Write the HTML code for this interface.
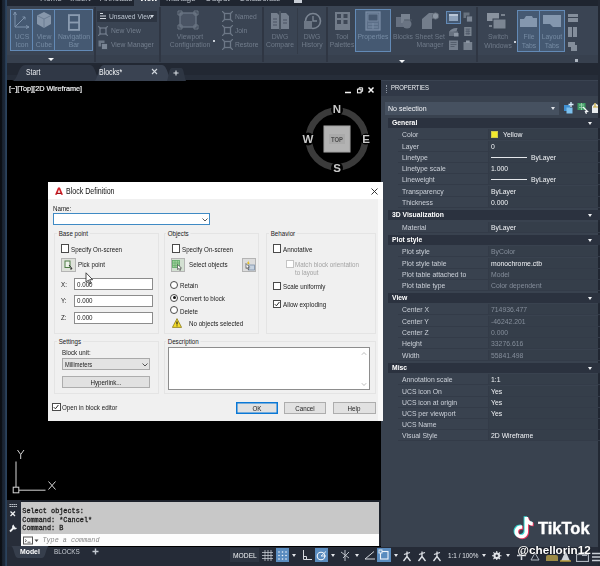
<!DOCTYPE html>
<html>
<head>
<meta charset="utf-8">
<style>
*{box-sizing:border-box;margin:0;padding:0}
html,body{width:600px;height:566px;overflow:hidden;background:#000}
body{font-family:"Liberation Sans",sans-serif;position:relative;color:#d8dce2}
#root{position:absolute;left:0;top:0;width:600px;height:566px;overflow:hidden;filter:blur(.4px)}
.a{position:absolute}
.t{position:absolute;white-space:nowrap}
/* ribbon */
.rl{position:absolute;white-space:nowrap;color:#6f7a89;font-size:8px;line-height:9px;text-align:center;transform:translateX(-50%) scaleX(.85)}
.rs{position:absolute;white-space:nowrap;color:#737e8d;font-size:8px;line-height:9px;transform:scaleX(.84);transform-origin:0 50%}
.hb{position:absolute;background:#455972;border:1px solid #638ab6}
.rl.hl{color:#768ba3}
.sep{position:absolute;top:7px;width:2px;height:55px;background:#2f3643}
.ic{position:absolute;background:#6a7482}
/* props */
.ps{position:absolute;left:388px;width:212px;height:10px;background:#2b323f;color:#fff;font-weight:bold;font-size:7.8px;line-height:10px}
.ps em{position:absolute;left:4px;top:0;font-style:normal;white-space:nowrap;transform:scaleX(.87);transform-origin:0 50%}
.ps i{position:absolute;right:8px;top:4px;width:0;height:0;border-left:2.5px solid transparent;border-right:2.5px solid transparent;border-top:3px solid #eef0f3}
.pr{position:absolute;left:388px;width:212px;height:11px;font-size:7.7px;line-height:11px;color:#ccd1d9}
.pr b{position:absolute;left:14px;font-weight:normal;white-space:nowrap;transform:scaleX(.89);transform-origin:0 50%}
.pr u{position:absolute;left:103px;text-decoration:none;color:#f3f5f8;white-space:nowrap;transform:scaleX(.89);transform-origin:0 50%}
.pr u.d{color:#858e9b}
.pr s{position:absolute;left:10px;right:0;bottom:0;height:1px;background:#333b48;text-decoration:none}
.pr q{position:absolute;left:100px;right:0;top:0;bottom:0;background:rgba(20,26,36,.10);border-left:1px solid #333b48}
.pr q:before,.pr q:after{content:''}
/* dialog */
#dlg{position:absolute;left:48.400px;top:182px;width:335px;height:238.500px;background:#f0f0f0;color:#1a1a1a;font-size:7.4px}
#dlg .t{line-height:9px;transform:translateY(-50%) scaleX(.84);transform-origin:0 50%}
.grp{position:absolute;border:1px solid #e4e4e4}
.cb{position:absolute;width:8.3px;height:8.3px;border:1px solid #4a4a4a;background:#fff}
.rd{position:absolute;width:8px;height:8px;border:1px solid #4a4a4a;background:#fff;border-radius:50%}
.inp{position:absolute;background:#fff;border:1px solid #7a7a7a;font-size:7.6px;letter-spacing:-.2px}
.btn{position:absolute;background:#e1e1e1;border:1px solid #adadad;font-size:7.6px;text-align:center;letter-spacing:-.2px}
.ib{position:absolute;background:#dddddd;border:1px solid #b4b4b4}
</style>
</head>
<body>
<div id="root">
<!-- base -->
<div class="a" style="left:0;top:0;width:600px;height:63px;background:#3a4453"></div>
<div class="a" style="left:0;top:55px;width:600px;height:8px;background:#37404e"></div>
<div class="a" style="left:0;top:0;width:600px;height:6px;background:#1f2530"></div>
<div class="a" style="left:134px;top:0;width:26px;height:7px;background:#3a4453"></div>
<div class="a" style="left:0;top:63px;width:600px;height:17px;background:#222833"></div>
<div class="a" style="left:0;top:75px;width:600px;height:5px;background:#262d39"></div>
<div class="a" style="left:7.500px;top:80px;width:373.200px;height:420px;background:#000"></div>
<div class="a" style="left:381px;top:80px;width:219px;height:467px;background:#39424f"></div>
<div class="a" style="left:381px;top:80px;width:0;height:0"></div>
<div class="a" style="left:381px;top:79.500px;width:219px;height:16px;background:#313947;border-top:1.500px solid #3a4351"></div>
<div class="a" style="left:0;top:546.500px;width:600px;height:20px;background:#252b37"></div>
<div class="a" style="left:598px;top:0;width:2px;height:566px;background:#222833"></div>
<div class="a" style="left:0;top:0;width:7.200px;height:566px;background:linear-gradient(90deg,#0b0e13 0,#0d1117 2px,#1a2432 2.600px,#1c2838 5.200px,#2b425c 5.600px,#2b425c 6.600px,#20262f 7.200px)"></div>
<div class="a" style="left:7px;top:500px;width:374px;height:46px;background:#1d222b"></div>
<div class="a" style="left:7px;top:500px;width:14px;height:46.500px;background:#272d39"></div>
<!-- sec_ribbon -->
<div class="t" style="left:40px;top:-6.800px;font-size:8.5px;line-height:10px;color:#b9bfc8;width:18px;text-align:center;letter-spacing:-.2px">Home</div>
<div class="t" style="left:70px;top:-6.800px;font-size:8.5px;line-height:10px;color:#b9bfc8;width:15px;text-align:center;letter-spacing:-.2px">Insert</div>
<div class="t" style="left:100px;top:-6.800px;font-size:8.5px;line-height:10px;color:#b9bfc8;width:28px;text-align:center;letter-spacing:-.2px">Annotate</div>
<div class="t" style="left:166px;top:-6.800px;font-size:8.5px;line-height:10px;color:#b9bfc8;width:27px;text-align:center;letter-spacing:-.2px">Manage</div>
<div class="t" style="left:205px;top:-6.800px;font-size:8.5px;line-height:10px;color:#b9bfc8;width:23px;text-align:center;letter-spacing:-.2px">Output</div>
<div class="t" style="left:239px;top:-6.800px;font-size:8.5px;line-height:10px;color:#b9bfc8;width:36px;text-align:center;letter-spacing:-.2px">Collaborate</div>
<div class="t" style="left:139px;top:-6.800px;font-size:8.5px;line-height:10px;color:#fff;font-weight:bold;letter-spacing:-.2px">View</div>
<div class="a" style="left:294px;top:0;width:8px;height:3px;background:#c9ced6"></div>
<div class="sep" style="left:94px"></div>
<div class="sep" style="left:159px"></div>
<div class="sep" style="left:262px"></div>
<div class="sep" style="left:326px"></div>
<div class="sep" style="left:476px"></div>
<div class="a" style="left:297px;top:8px;width:1px;height:46px;background:#333b48"></div>
<div class="hb" style="left:10px;top:9px;width:23px;height:42px"></div>
<div class="hb" style="left:32px;top:9px;width:23px;height:42px"></div>
<div class="hb" style="left:54px;top:9px;width:39px;height:42px"></div>
<svg class="a" style="left:12px;top:11px" width="19" height="20" viewBox="0 0 19 20"><path d="M3 1v15h14M3 16L13 6" stroke="#7f93ab" stroke-width="1" fill="none"/><path d="M1.5 4L3 1l1.5 3M14 14.5l3 1.5-3 1.5M10.5 6H13v2.5" stroke="#7f93ab" stroke-width="1" fill="none"/></svg>
<svg class="a" style="left:35px;top:11px" width="18" height="19" viewBox="0 0 18 19"><path d="M9 1l7 3.5v8.5l-7 4-7-4V4.5z" fill="#8797ab"/><path d="M2 4.5l7 3.5 7-3.5M9 8v9" stroke="#6b7d93" stroke-width="1" fill="none"/></svg>
<svg class="a" style="left:68px;top:13.500px" width="12" height="17" viewBox="0 0 13 18"><rect x="1" y="1" width="11" height="16" fill="none" stroke="#8a9bb0" stroke-width="2"/><path d="M1 9h11" stroke="#8a9bb0" stroke-width="2"/></svg>
<div class="rl hl" style="left:21.5px;top:31.5px">UCS</div>
<div class="rl hl" style="left:21.5px;top:40.3px">Icon</div>
<div class="rl hl" style="left:43.5px;top:31.5px">View</div>
<div class="rl hl" style="left:43.5px;top:40.3px">Cube</div>
<div class="rl hl" style="left:73.5px;top:31.5px">Navigation</div>
<div class="rl hl" style="left:73.5px;top:40.3px">Bar</div>
<div class="a" style="left:48px;top:58px;width:0;height:0;border-left:3px solid transparent;border-right:3px solid transparent;border-top:3.5px solid #f4f6f8"></div>
<div class="a" style="left:97px;top:11px;width:59.500px;height:10.500px;background:#2d3542"></div>
<svg class="a" style="left:99px;top:12.300px" width="8" height="8" viewBox="0 0 8 8"><path d="M1 1.5h3M1 4h6M1 6.5h6" stroke="#d5dae1" stroke-width="1.2"/></svg>
<div class="rs" style="left:109px;top:11.800px;color:#bcc5d1">Unsaved View</div>
<div class="a" style="left:150px;top:14.800px;width:0;height:0;border-left:2.5px solid transparent;border-right:2.5px solid transparent;border-top:3px solid #cfd5dd"></div>
<svg class="a" style="left:98px;top:26px" width="10" height="10" viewBox="0 0 10 10"><rect x="2" y="2" width="6" height="6" fill="none" stroke="#6d7887" stroke-width="1.3"/><path d="M0 0l3 3M10 0L7 3M0 10l3-3M10 10L7 7" stroke="#6d7887" stroke-width="1.2"/></svg>
<div class="rs" style="left:110.5px;top:26.2px">New View</div>
<svg class="a" style="left:98px;top:40px" width="10" height="10" viewBox="0 0 10 10"><rect x="0.5" y="0.5" width="6" height="6" fill="#6d7887"/><rect x="3.5" y="3.5" width="6" height="6" fill="#7b8695" stroke="#394251" stroke-width=".8"/></svg>
<div class="rs" style="left:110.5px;top:40.3px">View Manager</div>
<svg class="a" style="left:177px;top:10px" width="22" height="20" viewBox="0 0 22 20"><rect x="3" y="3" width="16" height="14" fill="#4a5464" stroke="#6f7a89" stroke-width="1.2"/><path d="M1 1h4v4H1zM17 1h4v4h-4zM1 15h4v4H1zM17 15h4v4h-4z" fill="none" stroke="#6f7a89" stroke-width=".9"/></svg>
<div class="rl" style="left:189.5px;top:31.5px">Viewport</div>
<div class="rl" style="left:189.5px;top:40.3px">Configuration</div>
<div class="a" style="left:212.5px;top:40px;width:2px;height:2px;background:#c8ced6"></div>
<svg class="a" style="left:222px;top:11.0px" width="11" height="11" viewBox="0 0 11 11"><rect x="2.5" y="2.5" width="6" height="6" fill="none" stroke="#6d7887" stroke-width="1.3"/><path d="M0 0l3 3M11 0L8 3M0 11l3-3M11 11L8 8" stroke="#6d7887" stroke-width="1.2"/></svg>
<div class="rs" style="left:235.3px;top:12.0px">Named</div>
<svg class="a" style="left:222px;top:25.2px" width="11" height="11" viewBox="0 0 11 11"><rect x="2.5" y="2.5" width="6" height="6" fill="none" stroke="#6d7887" stroke-width="1.3"/><path d="M0 0l3 3M11 0L8 3M0 11l3-3M11 11L8 8" stroke="#6d7887" stroke-width="1.2"/></svg>
<div class="rs" style="left:235.3px;top:26.2px">Join</div>
<svg class="a" style="left:222px;top:39.3px" width="11" height="11" viewBox="0 0 11 11"><rect x="2.5" y="2.5" width="6" height="6" fill="none" stroke="#6d7887" stroke-width="1.3"/><path d="M0 0l3 3M11 0L8 3M0 11l3-3M11 11L8 8" stroke="#6d7887" stroke-width="1.2"/></svg>
<div class="rs" style="left:235.3px;top:40.3px">Restore</div>
<svg class="a" style="left:270px;top:11px" width="20" height="19" viewBox="0 0 20 19"><path d="M1 2h6l2 2v14H1zM11 2h5l3 3v13h-8z" fill="#757f8d"/><path d="M3 8h4M3 11h4M3 14h4M13 9h4M13 12h4" stroke="#4a5362" stroke-width="1"/><path d="M10 0v19" stroke="#59626f" stroke-width="1"/></svg>
<div class="rl" style="left:279.5px;top:31.5px">DWG</div>
<div class="rl" style="left:279.5px;top:40.3px">Compare</div>
<svg class="a" style="left:303px;top:12px" width="19" height="19" viewBox="0 0 19 19"><circle cx="10" cy="9" r="7.5" fill="none" stroke="#7a8492" stroke-width="1.6"/><path d="M10 4v5h4" stroke="#7a8492" stroke-width="1.4" fill="none"/><rect x="1" y="9" width="8" height="8" fill="#6d7785"/></svg>
<div class="rl" style="left:312.0px;top:31.5px">DWG</div>
<div class="rl" style="left:312.0px;top:40.3px">History</div>
<svg class="a" style="left:334px;top:11px" width="17" height="20" viewBox="0 0 17 20"><rect x="1" y="1" width="15" height="18" fill="#727c8a"/><path d="M3 3h4v4H3zM9.5 3h4v4h-4zM3 9h4v4H3zM9.5 9h4v4h-4z" fill="#3f4857"/></svg>
<div class="rl" style="left:342.0px;top:31.5px">Tool</div>
<div class="rl" style="left:342.0px;top:40.3px">Palettes</div>
<div class="hb" style="left:355px;top:9px;width:36px;height:43px"></div>
<svg class="a" style="left:365px;top:11px" width="16" height="20" viewBox="0 0 16 20"><rect x="1" y="1" width="14" height="18" fill="#5c6f88" stroke="#7d90a8" stroke-width="1.2"/><rect x="3" y="3" width="10" height="7" fill="#485a72" stroke="#7d90a8" stroke-width=".8"/><path d="M3 13h10M3 16h10M8 12v6" stroke="#7d90a8" stroke-width=".9"/></svg>
<div class="rl hl" style="left:373.0px;top:31.5px">Properties</div>
<svg class="a" style="left:394px;top:12px" width="19" height="18" viewBox="0 0 19 18"><path d="M2 5h8v10H2z" fill="#667080"/><path d="M7 2h9v9H7z" fill="#788290"/><circle cx="13" cy="12" r="4.5" fill="#6a7483"/><path d="M10 8l8 0" stroke="#525c6a" stroke-width="1"/></svg>
<div class="rl" style="left:402.5px;top:31.5px">Blocks</div>
<svg class="a" style="left:420px;top:11px" width="20" height="20" viewBox="0 0 20 20"><path d="M2 18V8l7-6h9l-6 6v10z" fill="#737d8b"/><circle cx="15.5" cy="5" r="3.2" fill="#8a94a1" stroke="#59626f" stroke-width=".8"/></svg>
<div class="rl" style="left:430.0px;top:31.5px">Sheet Set</div>
<div class="rl" style="left:430.0px;top:40.3px">Manager</div>
<div class="a" style="left:399px;top:59.5px;width:0;height:0;border-left:3px solid transparent;border-right:3px solid transparent;border-top:3.5px solid #f4f6f8"></div>
<div class="hb" style="left:446.400px;top:10.500px;width:14.500px;height:13.500px"></div>
<div class="a" style="left:449px;top:14px;width:9px;height:7px;background:#8fa3bb"></div>
<div class="a" style="left:449px;top:14px;width:9px;height:1.500px;background:#b9c6d6"></div>
<svg class="a" style="left:446px;top:10px" width="28" height="42" viewBox="0 0 28 42"><rect x="17.500" y="2.500" width="6" height="5.500" fill="#68727f"/><rect x="20.500" y="6" width="6" height="6" fill="#7c8694" stroke="#3a4453" stroke-width=".8"/><path d="M3 22.500c1-3.500 5-5 8.500-4.500l-1 3.500z" fill="#7a8492"/><rect x="3" y="21.500" width="9" height="4.500" fill="#687280"/><rect x="8" y="23" width="4.500" height="3.500" fill="#8e98a5"/><rect x="18.200" y="17" width="7.300" height="9" fill="#79838f"/><path d="M19.500 19h4.700M19.500 21.300h4.700M19.500 23.600h4.700M21 19v6M22.800 19v6" stroke="#4b5564" stroke-width=".7"/><rect x="3" y="30.500" width="9" height="9.500" fill="#747e8c"/><path d="M4.500 32.500h6M4.500 34.500h6M4.500 36.500h4" stroke="#4b5564" stroke-width=".8"/><rect x="17.500" y="32" width="8.700" height="8" fill="#77818e"/><rect x="20" y="30.500" width="3.700" height="2.500" fill="#8d97a4"/></svg>
<svg class="a" style="left:487px;top:13px" width="20" height="17" viewBox="0 0 20 17"><rect x="0" y="0" width="12" height="8" fill="#8a939f"/><rect x="6" y="6" width="13" height="10" fill="#7b8592" stroke="#394251" stroke-width="1"/><path d="M14 2h4M2 13h3" stroke="#b8c0ca" stroke-width="1.2"/></svg>
<div class="rl" style="left:497.5px;top:31.8px">Switch</div>
<div class="rl" style="left:497.5px;top:40.8px">Windows</div>
<div class="a" style="left:514px;top:40.5px;width:2px;height:2px;background:#c8ced6"></div>
<div class="hb" style="left:517px;top:10px;width:23px;height:42px"></div>
<div class="hb" style="left:539px;top:10px;width:26px;height:42px"></div>
<svg class="a" style="left:520px;top:14px" width="17" height="14" viewBox="0 0 17 14"><path d="M0 13V5h4l2-3h6l1 2h4v9z" fill="#8497ae"/></svg>
<svg class="a" style="left:543px;top:14px" width="18" height="14" viewBox="0 0 18 14"><path d="M0 1h18v12H10l-3-3H0z" fill="#8497ae"/></svg>
<div class="rl hl" style="left:528.5px;top:31.8px">File</div>
<div class="rl hl" style="left:528.5px;top:40.8px">Tabs</div>
<div class="rl hl" style="left:552.0px;top:31.8px">Layout</div>
<div class="rl hl" style="left:552.0px;top:40.8px">Tabs</div>
<div class="ic" style="left:568.0px;top:13.5px;width:9.5px;height:3.5px;background:#848e9b"></div>
<div class="ic" style="left:568.0px;top:18.0px;width:9.5px;height:3.5px;background:#848e9b"></div>
<div class="ic" style="left:568.0px;top:27.0px;width:4.0px;height:9.5px;background:#848e9b"></div>
<div class="ic" style="left:572.5px;top:27.0px;width:4.5px;height:9.5px;background:#848e9b"></div>
<div class="ic" style="left:568.0px;top:41.5px;width:6.5px;height:5.5px;background:#848e9b"></div>
<div class="ic" style="left:570.5px;top:45.0px;width:6.5px;height:5.5px;background:#848e9b"></div>
<div class="a" style="left:575px;top:59px;width:3px;height:3px;background:#aeb6c1"></div>
<!-- sec_tabs -->
<svg class="a" style="left:10px;top:64px" width="190" height="17" viewBox="0 0 190 17"><path d="M2 17C8 17 8 1 15 1H80C86 1 86 17 92 17z" fill="#303846"/><path d="M84 17C88 17 88 1 94 1H152C158 1 158 17 164 17z" fill="#3a4352"/><path d="M157 17C159 12 159 4 162 4H171C174 4 174 12 176 17z" fill="#2e3643"/></svg>
<div class="t" style="left:26px;top:67px;font-size:8.2px;line-height:12px;color:#e9ecf0;transform:scaleX(.83);transform-origin:0 50%">Start</div>
<div class="t" style="left:98.500px;top:67px;font-size:8.2px;line-height:12px;color:#f4f6f8;transform:scaleX(.85);transform-origin:0 50%">Blocks*</div>
<svg class="a" style="left:151px;top:68px" width="7" height="7" viewBox="0 0 7 7"><path d="M1 1l5 5M6 1L1 6" stroke="#cfd5dc" stroke-width="1.1"/></svg>
<svg class="a" style="left:172.500px;top:70px" width="6" height="6" viewBox="0 0 7 7"><path d="M3.5 .5v6M.5 3.5h6" stroke="#d8dde3" stroke-width="1.3"/></svg>
<!-- sec_canvas -->
<div class="t" style="left:9px;top:84px;font-size:7.6px;line-height:10px;color:#f0f1f3;-webkit-text-stroke:.2px #f0f1f3;transform:scaleX(.96);transform-origin:0 50%">[&minus;][Top][2D Wireframe]</div>
<svg class="a" style="left:343px;top:85px" width="34" height="11" viewBox="0 0 34 11"><path d="M2 7.5h6" stroke="#f2f2f2" stroke-width="1.5"/><rect x="14.500" y="4.200" width="3.600" height="3.600" fill="none" stroke="#ededed" stroke-width="1.100"/><path d="M16 4.200V2.800h3.600v3.600h-1.500" fill="none" stroke="#ededed" stroke-width="1"/><path d="M25.5 2.5l5 5M30.500 2.5l-5 5" stroke="#f5f5f5" stroke-width="1.5"/></svg>
<svg class="a" style="left:296px;top:98px" width="82" height="82" viewBox="0 0 82 82"><circle cx="41" cy="41" r="28.2" fill="none" stroke="#3b3b3b" stroke-width="6.6"/><circle cx="41" cy="12" r="6" fill="#000"/><circle cx="41" cy="70" r="6" fill="#000"/><circle cx="12" cy="41" r="6.5" fill="#000"/><circle cx="70" cy="41" r="5.5" fill="#000"/><rect x="27.5" y="27.5" width="27" height="27" fill="#a9a9a9"/><rect x="29" y="29" width="24" height="24" fill="#b3b3b3"/><rect x="33" y="36" width="16" height="10" fill="#aaaaaa"/><g font-family="Liberation Sans, sans-serif" font-weight="bold" fill="#c9c9c9" text-anchor="middle" font-size="11.5"><text x="41" y="15">N</text><text x="41" y="74.4">S</text><text x="12" y="45">W</text><text x="70" y="45">E</text></g><text x="41" y="43.8" font-family="Liberation Sans, sans-serif" font-size="7" font-weight="bold" fill="#4d4d4d" text-anchor="middle" textLength="12" lengthAdjust="spacingAndGlyphs">TOP</text></svg>
<svg class="a" style="left:10px;top:446px" width="52" height="50" viewBox="0 0 52 50"><path d="M6 15.500V41M9 44.2H35.500" stroke="#d6d6d6" stroke-width="1" fill="none"/><rect x="3.200" y="41.200" width="5.600" height="5.600" fill="none" stroke="#d6d6d6" stroke-width="1"/><path d="M7.500 4l3.200 4.500L14 4M10.700 8.500V13" stroke="#d6d6d6" stroke-width="1" fill="none"/><path d="M38.500 35.500l7 8M45.500 35.500l-7 8" stroke="#d6d6d6" stroke-width="1" fill="none"/></svg>
<!-- sec_props -->
<div class="a" style="left:386px;top:85px;width:1px;height:8px;border-left:1px dotted #8b94a1"></div>
<div class="t" style="left:391px;top:82px;font-size:7.4px;line-height:12px;color:#eef1f4;transform:scaleX(.8);transform-origin:0 50%">PROPERTIES</div>
<div class="a" style="left:385px;top:102px;width:174px;height:13px;background:#465160"></div>
<div class="t" style="left:388px;top:103px;font-size:7.8px;line-height:11px;color:#f2f4f7;transform:scaleX(.9);transform-origin:0 50%">No selection</div>
<div class="a" style="left:551px;top:107px;width:0;height:0;border-left:2.5px solid transparent;border-right:2.5px solid transparent;border-top:3px solid #dfe3e8"></div>
<svg class="a" style="left:563px;top:102px" width="37" height="12" viewBox="0 0 37 12"><rect x="1" y="3" width="6" height="6" fill="#3f8fd0"/><rect x="3.500" y="5.500" width="6" height="6" fill="#7cc0ee"/><path d="M8 0v5M5.500 2.500h5" stroke="#d9eefc" stroke-width="1.300"/><rect x="14.500" y="1" width="8" height="7" fill="#3f9a63"/><path d="M16 3h5M16 5.500h5M18.500 1v7" stroke="#9fd6b3" stroke-width=".8"/><path d="M20 5l4.500 4.500-2 .2 1 2" stroke="#f4f6f8" stroke-width="1.300" fill="none"/><path d="M29 4l3-3 3 2v8h-6z" fill="#e9ecef"/><path d="M32 1v4M30 5h5" stroke="#c8a93a" stroke-width="1.200"/></svg>
<div class="ps" style="top:118.0px"><em>General</em><i></i></div>
<div class="pr" style="top:129.1px"><q></q><b>Color</b><div class="a" style="left:103px;top:2px;width:7px;height:7px;background:#f3ea2d;border:1px solid #cfc84a"></div><u style="left:115px">Yellow</u><s></s></div>
<div class="pr" style="top:140.5px"><q></q><b>Layer</b><u>0</u><s></s></div>
<div class="pr" style="top:151.8px"><q></q><b>Linetype</b><div class="a" style="left:103px;top:5px;width:36px;height:1px;background:#e4e7eb"></div><u style="left:143px">ByLayer</u><s></s></div>
<div class="pr" style="top:163.1px"><q></q><b>Linetype scale</b><u>1.000</u><s></s></div>
<div class="pr" style="top:174.3px"><q></q><b>Lineweight</b><div class="a" style="left:103px;top:5px;width:36px;height:1px;background:#e4e7eb"></div><u style="left:143px">ByLayer</u><s></s></div>
<div class="pr" style="top:185.6px"><q></q><b>Transparency</b><u>ByLayer</u><s></s></div>
<div class="pr" style="top:196.8px"><q></q><b>Thickness</b><u>0.000</u><s></s></div>
<div class="ps" style="top:210.3px"><em>3D Visualization</em><i></i></div>
<div class="pr" style="top:221.5px"><q></q><b>Material</b><u>ByLayer</u><s></s></div>
<div class="ps" style="top:235.2px"><em>Plot style</em><i></i></div>
<div class="pr" style="top:246.3px"><q></q><b>Plot style</b><u class="d">ByColor</u><s></s></div>
<div class="pr" style="top:257.5px"><q></q><b>Plot style table</b><u>monochrome.ctb</u><s></s></div>
<div class="pr" style="top:268.7px"><q></q><b>Plot table attached to</b><u class="d">Model</u><s></s></div>
<div class="pr" style="top:279.9px"><q></q><b>Plot table type</b><u class="d">Color dependent</u><s></s></div>
<div class="ps" style="top:293.3px"><em>View</em><i></i></div>
<div class="pr" style="top:304.3px"><q></q><b>Center X</b><u class="d">714936.477</u><s></s></div>
<div class="pr" style="top:315.5px"><q></q><b>Center Y</b><u class="d">-46242.201</u><s></s></div>
<div class="pr" style="top:326.8px"><q></q><b>Center Z</b><u class="d">0.000</u><s></s></div>
<div class="pr" style="top:338.0px"><q></q><b>Height</b><u class="d">33276.616</u><s></s></div>
<div class="pr" style="top:349.5px"><q></q><b>Width</b><u class="d">55841.498</u><s></s></div>
<div class="ps" style="top:363.0px"><em>Misc</em><i></i></div>
<div class="pr" style="top:374.4px"><q></q><b>Annotation scale</b><u>1:1</u><s></s></div>
<div class="pr" style="top:385.5px"><q></q><b>UCS icon On</b><u>Yes</u><s></s></div>
<div class="pr" style="top:396.7px"><q></q><b>UCS icon at origin</b><u>Yes</u><s></s></div>
<div class="pr" style="top:407.8px"><q></q><b>UCS per viewport</b><u>Yes</u><s></s></div>
<div class="pr" style="top:418.9px"><q></q><b>UCS Name</b><u></u><s></s></div>
<div class="pr" style="top:430.0px"><q></q><b>Visual Style</b><u>2D Wireframe</u><s></s></div>
<!-- sec_cmd -->
<div class="a" style="left:20.600px;top:502.300px;width:358.800px;height:32px;background:#c8c8c8"></div>
<div class="t" style="left:22.3px;top:506.8px;font-family:'Liberation Mono',monospace;font-size:6.85px;line-height:9px;color:#1c1c1c;-webkit-text-stroke:.28px #1c1c1c">Select objects:</div>
<div class="t" style="left:22.3px;top:515.7px;font-family:'Liberation Mono',monospace;font-size:6.85px;line-height:9px;color:#1c1c1c;-webkit-text-stroke:.28px #1c1c1c">Command: *Cancel*</div>
<div class="t" style="left:22.3px;top:524.4px;font-family:'Liberation Mono',monospace;font-size:6.85px;line-height:9px;color:#1c1c1c;-webkit-text-stroke:.28px #1c1c1c">Command: B</div>
<div class="a" style="left:20.600px;top:534px;width:358.800px;height:12.200px;background:#fdfdfd"></div>
<svg class="a" style="left:23px;top:536px" width="16" height="9" viewBox="0 0 16 9"><rect x=".5" y="1" width="9" height="7" fill="#fff" stroke="#555" stroke-width="1"/><path d="M2 3.500l1.500 1.200L2 6M4.500 6.200h3" stroke="#444" stroke-width=".8" fill="none"/><path d="M11.500 3.500h4l-2 2.500z" fill="#444"/></svg>
<div class="t" style="left:42.4px;top:536px;font-family:'Liberation Mono',monospace;font-style:italic;font-size:6.8px;line-height:9px;color:#8a8a8a">Type a command</div>
<svg class="a" style="left:8px;top:503px" width="12" height="32" viewBox="0 0 12 32"><path d="M1.500 1.500h8M1.500 3.500h8" stroke="#cfd4da" stroke-width="1" stroke-dasharray="1.400 .6"/><path d="M2.500 8.500l4.500 4.500M7 8.500l-4.500 4.500" stroke="#f0f2f4" stroke-width="1.300"/><path d="M2 28.500l4.500-4.500" stroke="#f0f2f4" stroke-width="1.800"/><path d="M5.500 21.500a2.600 2.600 0 1 0 3.500 3.500l-2-.5-.8-1.600z" fill="#f0f2f4"/></svg>
<!-- sec_status -->
<svg class="a" style="left:10px;top:546px" width="40" height="13" viewBox="0 0 40 13"><path d="M1 0C4 0 4 12 8 12H32C36 12 36 0 39 0z" fill="#363e4c"/></svg>
<div class="t" style="left:19.500px;top:546px;font-size:7.8px;line-height:11px;font-weight:bold;color:#fff;transform:scaleX(.88);transform-origin:0 50%">Model</div>
<div class="t" style="left:54px;top:546px;font-size:7.6px;line-height:11px;color:#c9ced5;transform:scaleX(.84);transform-origin:0 50%">BLOCKS</div>
<svg class="a" style="left:92px;top:548px" width="7" height="7" viewBox="0 0 7 7"><path d="M3.500 .5v6M.5 3.500h6" stroke="#c4cad2" stroke-width="1.400"/></svg>
<div class="a" style="left:230px;top:548px;width:29px;height:14px;background:#2e3542"></div>
<div class="t" style="left:233px;top:549.500px;font-size:7.8px;line-height:11px;color:#f1f3f5;transform:scaleX(.86);transform-origin:0 50%">MODEL</div>
<svg class="a" style="left:262px;top:550px" width="11" height="11" viewBox="0 0 11 11"><path d="M3 0v11M6 0v11M9 0v11M0 2.500h11M0 5.500h11M0 8.500h11" stroke="#c5cad1" stroke-width=".8"/></svg>
<div class="a" style="left:276px;top:548px;width:13px;height:14px;background:#5a8cbf"></div>
<svg class="a" style="left:277px;top:549.500px" width="11" height="11" viewBox="0 0 11 11"><g fill="#eef3f9"><circle cx="2" cy="2" r=".8"/><circle cx="5.500" cy="2" r=".8"/><circle cx="9" cy="2" r=".8"/><circle cx="2" cy="5.500" r=".8"/><circle cx="5.500" cy="5.500" r=".8"/><circle cx="9" cy="5.500" r=".8"/><circle cx="2" cy="9" r=".8"/><circle cx="5.500" cy="9" r=".8"/><circle cx="9" cy="9" r=".8"/></g></svg>
<div class="a" style="left:291.5px;top:554.0px;width:0;height:0;border-left:2.5px solid transparent;border-right:2.5px solid transparent;border-top:3px solid #e3e6ea"></div>
<svg class="a" style="left:302px;top:550px" width="10" height="11" viewBox="0 0 10 11"><path d="M1.500 0v9.500h8.500M1.500 6.500h3v3" stroke="#d5d9df" stroke-width="1" fill="none"/></svg>
<div class="a" style="left:315px;top:548px;width:13px;height:14px;background:#5a8cbf"></div>
<svg class="a" style="left:316px;top:549.500px" width="11" height="11" viewBox="0 0 11 11"><circle cx="5" cy="6" r="3.800" fill="none" stroke="#f2f6fa" stroke-width="1.100"/><path d="M5 6L10 1.500M5 6h5" stroke="#f2f6fa" stroke-width=".9"/></svg>
<div class="a" style="left:331.0px;top:554.0px;width:0;height:0;border-left:2.5px solid transparent;border-right:2.5px solid transparent;border-top:3px solid #e3e6ea"></div>
<svg class="a" style="left:340px;top:549.500px" width="10" height="12" viewBox="0 0 10 12"><path d="M5 0v11M1 2l8 6M9 2L3 8" stroke="#c9ced5" stroke-width=".9" fill="none"/></svg>
<div class="a" style="left:355.0px;top:554.0px;width:0;height:0;border-left:2.5px solid transparent;border-right:2.5px solid transparent;border-top:3px solid #e3e6ea"></div>
<svg class="a" style="left:364px;top:551px" width="11" height="9" viewBox="0 0 11 9"><path d="M10 .5L1 8h10" stroke="#d5d9df" stroke-width="1" fill="none"/></svg>
<div class="a" style="left:377px;top:548px;width:14px;height:14px;background:#5a8cbf"></div>
<svg class="a" style="left:378px;top:549px" width="12" height="12" viewBox="0 0 12 12"><rect x="2.500" y="2.500" width="7.500" height="7.500" fill="none" stroke="#eef3f9" stroke-width="1.100"/><rect x="1" y="1" width="3" height="3" fill="#5a8cbf" stroke="#eef3f9" stroke-width=".9"/></svg>
<div class="a" style="left:393.5px;top:554.0px;width:0;height:0;border-left:2.5px solid transparent;border-right:2.5px solid transparent;border-top:3px solid #e3e6ea"></div>
<svg class="a" style="left:402px;top:549.500px" width="11" height="12" viewBox="0 0 11 12"><path d="M5 1.500v5M5 6.500L1.500 11M5 6.500l3.500 4.500M2 4.500l6-2" stroke="#e0e4e9" stroke-width="1.300" fill="none"/></svg>
<svg class="a" style="left:417px;top:549.500px" width="11" height="12" viewBox="0 0 11 12"><path d="M5 1.500v5M5 6.500L1.500 11M5 6.500l3.500 4.500M2 4.500l6-2" stroke="#e0e4e9" stroke-width="1.300" fill="none"/></svg>
<svg class="a" style="left:432px;top:549.500px" width="11" height="12" viewBox="0 0 11 12"><path d="M5 1.500v5M5 6.500L1.500 11M5 6.500l3.500 4.500M2 4.500l6-2" stroke="#e0e4e9" stroke-width="1.300" fill="none"/></svg>
<div class="t" style="left:447.500px;top:550px;font-size:7.6px;line-height:11px;color:#dfe3e8;transform:scaleX(.84);transform-origin:0 50%">1:1 / 100%</div>
<div class="a" style="left:481.5px;top:554.0px;width:0;height:0;border-left:2.5px solid transparent;border-right:2.5px solid transparent;border-top:3px solid #e3e6ea"></div>
<svg class="a" style="left:492px;top:550.500px" width="9.500" height="9.500" viewBox="0 0 12 12"><circle cx="6" cy="6" r="3.200" fill="none" stroke="#e3e6ea" stroke-width="2"/><path d="M6 0v12M0 6h12M1.800 1.800l8.400 8.400M10.200 1.800L1.800 10.200" stroke="#e3e6ea" stroke-width="1.400"/><circle cx="6" cy="6" r="1.500" fill="#222833"/></svg>
<div class="a" style="left:505.5px;top:554.0px;width:0;height:0;border-left:2.5px solid transparent;border-right:2.5px solid transparent;border-top:3px solid #e3e6ea"></div>
<svg class="a" style="left:517px;top:551px" width="9" height="9" viewBox="0 0 9 9"><path d="M4.500 0v9M0 4.500h9" stroke="#cfd4da" stroke-width="1.500"/></svg>
<svg class="a" style="left:530px;top:552px" width="10" height="9" viewBox="0 0 10 9"><path d="M5 1L1 8h8z" fill="none" stroke="#aeb5be" stroke-width="1"/></svg>
<div class="a" style="left:546px;top:555px;width:12px;height:6px;background:#9c8a45;border-radius:2px 2px 0 0"></div>
<svg class="a" style="left:560px;top:551px" width="11" height="11" viewBox="0 0 11 11"><path d="M5.500 0L1 10h9z" fill="#cfd4da"/><path d="M0 10h11" stroke="#b59a3a" stroke-width="1.500"/></svg>
<svg class="a" style="left:576px;top:552px" width="13" height="10" viewBox="0 0 13 10"><rect x=".5" y="2.500" width="12" height="7" fill="none" stroke="#aeb4bd" stroke-width="1.200"/><rect x="6" y="0" width="5" height="4" fill="#aeb4bd"/></svg>
<svg class="a" style="left:592px;top:552px" width="8" height="10" viewBox="0 0 8 10"><path d="M0 1.500h8M0 5h8M0 8.500h8" stroke="#c9ced5" stroke-width="1.400"/></svg>
<!-- sec_dialog -->
<div id="dlg">
<div class="a" style="left:0;top:0;width:100%;height:17px;background:#fff"></div>
<div class="a" style="right:0;top:17px;width:5px;bottom:0;background:#f9f9f9"></div>
<svg class="a" style="left:6.200px;top:4.600px" width="8" height="8.400" viewBox="0 0 10 10"><path d="M0 9.500L3.800 .5h2.400L10 9.500H7.600L5 3 2.400 9.500z" fill="#d3222a"/><path d="M2 7h6v1.500H2z" fill="#9c1118"/></svg>
<div class="t" style="left:18.0px;top:8.6px;font-size:8.2px;transform:translateY(-50%) scaleX(.86);transform-origin:0 50%;color:#111">Block Definition</div>
<svg class="a" style="left:322.2px;top:5.5px" width="7" height="7" viewBox="0 0 7 7"><path d="M.5 .5l6 6M6.500 .5l-6 6" stroke="#222" stroke-width=".9"/></svg>
<div class="t" style="left:5.1px;top:26.0px;">Name:</div>
<div class="inp" style="left:5.1px;top:31.4px;width:156.9px;height:12px;border-color:#3f8ac4"></div>
<svg class="a" style="left:153.6px;top:36.0px" width="6" height="4" viewBox="0 0 6 4"><path d="M.5 .5L3 3 5.500 .5" stroke="#444" stroke-width=".9" fill="none"/></svg>
<div class="grp" style="left:6.0px;top:51.0px;width:104.6px;height:100.5px"></div>
<div class="t" style="left:8.2px;top:51.0px;background:#f0f0f0;padding:0 2px">Base point</div>
<div class="grp" style="left:115.6px;top:51.0px;width:95.5px;height:100.5px"></div>
<div class="t" style="left:118.0px;top:51.0px;background:#f0f0f0;padding:0 2px">Objects</div>
<div class="grp" style="left:218.0px;top:51.0px;width:109.6px;height:100.5px"></div>
<div class="t" style="left:220.6px;top:51.0px;background:#f0f0f0;padding:0 2px">Behavior</div>
<div class="grp" style="left:6.0px;top:158.5px;width:104.6px;height:53.5px"></div>
<div class="t" style="left:8.6px;top:158.5px;background:#f0f0f0;padding:0 2px">Settings</div>
<div class="grp" style="left:115.6px;top:158.5px;width:212.0px;height:53.5px"></div>
<div class="t" style="left:118.0px;top:158.5px;background:#f0f0f0;padding:0 2px">Description</div>
<div class="cb" style="left:12.3px;top:62.3px"></div>
<div class="t" style="left:22.2px;top:66.5px;">Specify On-screen</div>
<div class="ib" style="left:12.6px;top:76.2px;width:15px;height:13.700px;background:#dfe2db"></div>
<svg class="a" style="left:15.6px;top:78.2px" width="9" height="10" viewBox="0 0 9 10"><rect x="1" y="1" width="5" height="6.500" fill="#eef2ea" stroke="#4f7d46" stroke-width="1"/><path d="M5 5l3 3.500-1.400.1.600 1.300" stroke="#222" stroke-width=".9" fill="none"/></svg>
<div class="t" style="left:30.0px;top:82.3px;">Pick point</div>
<div class="t" style="left:12.2px;top:101.7px;">X:</div>
<div class="inp" style="left:25.8px;top:96.2px;width:78.6px;height:12px;border-color:#8c8c8c"></div>
<div class="t" style="left:28.6px;top:101.9px;">0.000</div>
<div class="t" style="left:12.2px;top:118.2px;">Y:</div>
<div class="inp" style="left:25.8px;top:112.8px;width:78.6px;height:12px;border-color:#8c8c8c"></div>
<div class="t" style="left:28.6px;top:118.4px;">0.000</div>
<div class="t" style="left:12.2px;top:135.2px;">Z:</div>
<div class="inp" style="left:25.8px;top:129.6px;width:78.6px;height:12px;border-color:#8c8c8c"></div>
<div class="t" style="left:28.6px;top:135.4px;">0.000</div>
<svg class="a" style="left:37.1px;top:90.0px" width="9" height="13" viewBox="0 0 9 13"><path d="M1 .8v9.400l2.300-2 1.500 3.600 1.300-.6-1.500-3.500h3z" fill="#fff" stroke="#222" stroke-width=".8"/></svg>
<div class="cb" style="left:123.6px;top:62.3px"></div>
<div class="t" style="left:133.2px;top:66.5px;">Specify On-screen</div>
<div class="ib" style="left:122.2px;top:76.2px;width:14.300px;height:13.700px;background:#d3e0d2"></div>
<svg class="a" style="left:123.9px;top:77.8px" width="11" height="11" viewBox="0 0 11 11"><rect x=".5" y=".5" width="7" height="7" fill="#9fcf9a" stroke="#5fa868" stroke-width=".8"/><path d="M3 .5v7M5.500 .5v7M.5 3h7M.5 5.500h7" stroke="#5fa868" stroke-width=".6"/><path d="M5.500 4.500v5l1.300-1 1 2 1-.5-1-2h1.700z" fill="#fff" stroke="#333" stroke-width=".6"/></svg>
<div class="t" style="left:140.4px;top:82.3px;">Select objects</div>
<div class="ib" style="left:193.7px;top:76.4px;width:14px;height:14px"></div>
<svg class="a" style="left:195.2px;top:77.8px" width="11" height="11" viewBox="0 0 11 11"><rect x="4.500" y="5" width="6" height="5" fill="#c6d2e0" stroke="#7c8fa8" stroke-width=".8"/><path d="M4.500 .5l1 3-1.800 .3z" fill="#f1d23c"/><path d="M3.500 2.500L5 4" stroke="#e0b820" stroke-width="1.200"/><path d="M2 3.500v5l1.200-.9.900 1.900.9-.4-.9-1.900h1.500z" fill="#fff" stroke="#333" stroke-width=".6"/></svg>
<div class="rd" style="left:121.9px;top:98.9px"></div>
<div class="t" style="left:132.0px;top:103.1px;">Retain</div>
<div class="rd" style="left:121.9px;top:111.9px"><div style="position:absolute;left:1.500px;top:1.500px;width:3px;height:3px;border-radius:50%;background:#111"></div></div>
<div class="t" style="left:132.0px;top:116.1px;">Convert to block</div>
<div class="rd" style="left:121.9px;top:124.4px"></div>
<div class="t" style="left:132.0px;top:128.6px;">Delete</div>
<svg class="a" style="left:123.4px;top:136.4px" width="10" height="10" viewBox="0 0 10 10"><path d="M5 .6L9.600 9.400H.4z" fill="#f5dd2a" stroke="#7a6a10" stroke-width=".7"/><path d="M5 3.500v3M5 7.400v.9" stroke="#111" stroke-width="1.100"/></svg>
<div class="t" style="left:140.7px;top:141.2px;">No objects selected</div>
<div class="cb" style="left:224.3px;top:62.3px"></div>
<div class="t" style="left:234.6px;top:66.5px;">Annotative</div>
<div class="cb" style="left:237.3px;top:77.8px;border-color:#c4c4c4"></div>
<div class="t" style="left:246.6px;top:82.0px;color:#a3a3a3">Match block orientation</div>
<div class="t" style="left:246.6px;top:89.8px;color:#a3a3a3">to layout</div>
<div class="cb" style="left:224.3px;top:100.0px"></div>
<div class="t" style="left:234.6px;top:104.2px;">Scale uniformly</div>
<div class="cb" style="left:224.3px;top:118.2px"><svg style="position:absolute;left:0;top:0" width="6" height="6" viewBox="0 0 6 6"><path d="M.8 3.200l1.600 1.600L5.400 1" stroke="#222" stroke-width="1" fill="none"/></svg></div>
<div class="t" style="left:234.6px;top:122.4px;">Allow exploding</div>
<div class="t" style="left:13.6px;top:169.5px;">Block unit:</div>
<div class="inp" style="left:13.6px;top:176.4px;width:88.4px;height:12px;background:#e3e3e3;border-color:#a9a9a9"></div>
<div class="t" style="left:16.6px;top:182.3px;transform:translateY(-50%) scaleX(.77);transform-origin:0 50%">Millimeters</div>
<svg class="a" style="left:93.6px;top:181.0px" width="6" height="4" viewBox="0 0 6 4"><path d="M.5 .5L3 3 5.500 .5" stroke="#444" stroke-width=".9" fill="none"/></svg>
<div class="btn" style="left:13.6px;top:194.3px;width:87.8px;height:11.400px"></div>
<div class="t" style="left:57.6px;top:200.0px;transform:translate(-50%,-50%) scaleX(.84);transform-origin:50% 50%">Hyperlink...</div>
<div class="inp" style="left:119.4px;top:165.3px;width:202.7px;height:42.9px;border-color:#8d8d8d"></div>
<svg class="a" style="left:313.1px;top:168.5px" width="6" height="36" viewBox="0 0 6 36"><path d="M.8 3.800L3 1.500l2.200 2.300M.8 32.200L3 34.500l2.200-2.300" stroke="#b5b5b5" stroke-width=".9" fill="none"/></svg>
<div class="cb" style="left:4.0px;top:220.6px"><svg style="position:absolute;left:0;top:0" width="6" height="6" viewBox="0 0 6 6"><path d="M.8 3.200l1.600 1.600L5.400 1" stroke="#222" stroke-width="1" fill="none"/></svg></div>
<div class="t" style="left:13.6px;top:225.0px;">Open in block editor</div>
<div class="btn" style="left:187.7px;top:219.5px;width:42.3px;height:12.200px;border-color:#0a78d6;box-shadow:inset 0 0 0 .5px #0a78d6"></div>
<div class="t" style="left:208.8px;top:225.6px;transform:translate(-50%,-50%) scaleX(.84);transform-origin:50% 50%">OK</div>
<div class="btn" style="left:235.7px;top:219.5px;width:42.3px;height:12.200px;border-color:#adadad"></div>
<div class="t" style="left:256.9px;top:225.6px;transform:translate(-50%,-50%) scaleX(.84);transform-origin:50% 50%">Cancel</div>
<div class="btn" style="left:284.6px;top:219.5px;width:42.6px;height:12.200px;border-color:#adadad"></div>
<div class="t" style="left:305.9px;top:225.6px;transform:translate(-50%,-50%) scaleX(.84);transform-origin:50% 50%">Help</div>
</div>
<!-- sec_tiktok -->
<svg class="a" style="left:512px;top:516px" width="23" height="24" viewBox="0 0 21 22"><path d="M11.500 1h3.200c.2 2.600 1.700 4.300 4.300 4.600v3.200c-1.600 0-3-.5-4.300-1.400v6.800c0 3.800-2.800 6.300-6.200 6.300S2.300 18 2.300 14.500c0-3.700 3.100-6.500 7-6v3.300c-2-.5-3.700.7-3.700 2.600 0 1.700 1.300 2.900 2.900 2.900s3-1.200 3-3.200z" fill="#3ad6d2" transform="translate(-.9,-.7)"/><path d="M11.500 1h3.200c.2 2.600 1.700 4.300 4.300 4.600v3.200c-1.600 0-3-.5-4.300-1.400v6.800c0 3.800-2.800 6.300-6.200 6.300S2.300 18 2.300 14.500c0-3.700 3.100-6.500 7-6v3.300c-2-.5-3.700.7-3.700 2.600 0 1.700 1.300 2.900 2.900 2.900s3-1.200 3-3.200z" fill="#e8385e" transform="translate(.9,.7)"/><path d="M11.500 1h3.200c.2 2.600 1.700 4.300 4.300 4.600v3.200c-1.600 0-3-.5-4.300-1.400v6.800c0 3.800-2.800 6.300-6.200 6.300S2.300 18 2.300 14.500c0-3.700 3.100-6.500 7-6v3.300c-2-.5-3.700.7-3.700 2.600 0 1.700 1.300 2.900 2.900 2.900s3-1.200 3-3.200z" fill="#fff"/></svg>
<div class="t" style="left:537.500px;top:519px;font-size:16px;line-height:20px;font-weight:bold;color:#fff;-webkit-text-stroke:.35px #fff;transform:scaleX(1.03);transform-origin:0 50%">TikTok</div>
<div class="t" style="left:517.600px;top:543px;font-size:11.700px;line-height:14px;font-weight:bold;color:#fff;text-shadow:0 0 1.500px rgba(0,0,0,.8)">@chellorin12</div>
</div>
</body>
</html>
